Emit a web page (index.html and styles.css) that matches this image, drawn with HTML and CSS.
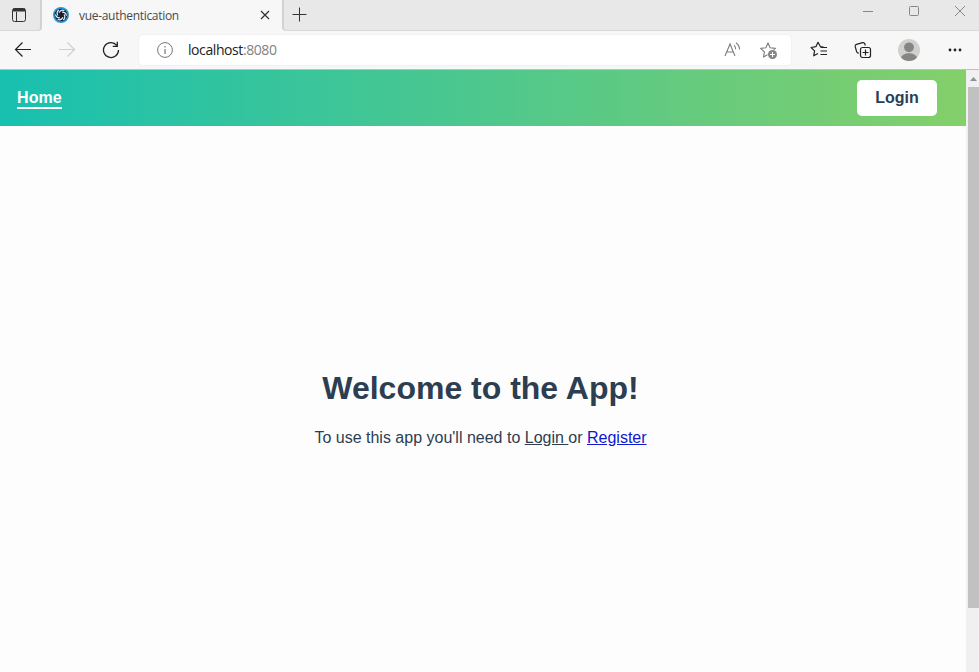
FILE: index.html
```html
<!DOCTYPE html>
<html lang="en">
<head>
<meta charset="utf-8">
<title>vue-authentication</title>
<link rel="stylesheet" href="styles.css">
</head>
<body>
<div class="browser">
  <header class="titlebar">
    <div class="tab-actions">
      <svg width="16" height="16" viewBox="0 0 16 16" fill="none" stroke="#333"><rect x="1.5" y="1.5" width="13" height="13" rx="2"/><path d="M2 3.5h12M2 2.5h12" stroke-width="2"/><path d="M5.5 5v9"/></svg>
    </div>
    <div class="tab">
      <svg class="favicon" width="16" height="16" viewBox="0 0 16 16"><circle cx="8" cy="8" r="8" fill="#2696dc"/><circle cx="8" cy="8" r="6.3" fill="#15202f"/><g fill="none" stroke="#e4edf5" stroke-width="1.2"><path id="blade" d="M6 5.6Q8 2.2 11.3 3.6"/><use href="#blade" transform="rotate(60 8 8)"/><use href="#blade" transform="rotate(120 8 8)"/><use href="#blade" transform="rotate(180 8 8)"/><use href="#blade" transform="rotate(240 8 8)"/><use href="#blade" transform="rotate(300 8 8)"/></g><circle cx="8" cy="8" r="1.5" fill="#15202f"/></svg>
      <span class="tab-title">vue-authentication</span>
      <svg class="tab-close" width="10" height="10" viewBox="0 0 10 10" stroke="#333" stroke-width="1.2"><path d="M1 1l8 8M9 1l-8 8"/></svg>
    </div>
    <div class="tab-rest">
      <svg width="15" height="15" viewBox="0 0 15 15" stroke="#333"><path d="M7.5 .5v14M.5 7.5h14"/></svg>
      <div class="window-buttons">
        <svg width="10" height="12" viewBox="0 0 10 12" stroke="#888"><path d="M0 6.5h10"/></svg>
        <svg width="10" height="12" viewBox="0 0 10 12" fill="none" stroke="#888"><rect x=".5" y="1.5" width="9" height="9" rx="1"/></svg>
        <svg width="10" height="12" viewBox="0 0 10 12" stroke="#888"><path d="M0 1l10 10M10 1L0 11"/></svg>
      </div>
    </div>
  </header>
  <div class="toolbar">
    <svg class="back" width="18" height="18" viewBox="0 0 18 18" fill="none" stroke="#222" stroke-width="1.2"><path d="M17 8.5H1.5M8.5 1.5l-7 7 7 7"/></svg>
    <svg class="forward" width="18" height="18" viewBox="0 0 18 18" fill="none" stroke="#d0d0d0" stroke-width="1.2"><path d="M1 8.5h15.5M9.5 1.5l7 7-7 7"/></svg>
    <svg class="reload" width="18" height="18" viewBox="0 0 18 18" fill="none" stroke="#222" stroke-width="1.3"><path d="M16.5 9A7.5 7.5 0 1 1 14.8 4.3M15.3.8v4.5h-4.5"/></svg>
    <div class="address">
      <svg width="16" height="16" viewBox="0 0 16 16" fill="none" stroke="#777"><circle cx="8" cy="8" r="7.4"/><path d="M8 7v5M8 4v1.4" stroke-width="1.2"/></svg>
      <span class="url">localhost<span class="port">:8080</span></span>
      <svg class="read" width="17" height="16" viewBox="0 0 17 16" fill="none" stroke="#7c7c7c" stroke-width="1.1"><path d="M1 14L6 2l5 12M2.8 10h6.4M10 3.2q1.6 1.5 1.6 4M12 .8q3.4 2.4 3.6 6.8"/></svg>
      <svg class="fav-add" width="18" height="18" viewBox="0 0 18 18"><path d="M8 1l2.1 4.8 5.3.6-3.9 3.5L12.6 15 8 12.4 3.4 15l1.1-5.1L.6 6.4l5.3-.6z" fill="none" stroke="#7c7c7c" stroke-width="1.1" stroke-linejoin="round"/><circle cx="12.5" cy="12.5" r="5" fill="#fff"/><circle cx="12.5" cy="12.5" r="4.5" fill="#858585"/><path d="M12.5 10v5M10 12.5h5" stroke="#fff"/></svg>
    </div>
    <svg class="favorites" width="18" height="18" viewBox="0 0 18 18" fill="none" stroke="#222" stroke-width="1.2" stroke-linejoin="round"><path d="M13.5 6.1l-3-.4L8 1.3 5.9 5.7l-4.8.8 3.5 3.4-.9 4.9L8 12.5M10.5 6.5H17M10.5 10H17M10.5 13.5H17"/></svg>
    <svg class="collections" width="18" height="18" viewBox="0 0 18 18" fill="none" stroke="#222" stroke-width="1.2"><rect x="6.5" y="6.5" width="10" height="10" rx="2"/><path d="M11.5 8.5v6M8.5 11.5h6M4.8 12.2Q3 12.2 2.6 10.7L1.2 5.5Q.8 3.8 2.5 3.3L8.6 1.6q1.7-.4 2.2 1.2l.5 1.7"/></svg>
    <svg class="profile" width="22" height="22" viewBox="0 0 22 22"><defs><clipPath id="avatar"><circle cx="11" cy="11" r="11"/></clipPath></defs><g clip-path="url(#avatar)"><path d="M0 0h22v22H0z" fill="#d2d0cd"/><circle cx="11" cy="8.3" r="4.9" fill="#858585"/><ellipse cx="11" cy="19" rx="8" ry="4.7" fill="#858585"/></g></svg>
    <svg class="more" width="14" height="4" viewBox="0 0 14 4" fill="#222"><circle cx="2" cy="2" r="1.4"/><circle cx="7" cy="2" r="1.4"/><circle cx="12" cy="2" r="1.4"/></svg>
  </div>
  <div class="viewport">
    <div class="page">
      <nav class="nav">
        <a class="home">Home</a>
        <button class="login">Login</button>
      </nav>
      <main class="welcome">
        <h1>Welcome to the App!</h1>
        <p>To use this app you'll need to <span class="link">Login </span>or <span class="link register">Register</span></p>
      </main>
    </div>
    <div class="scrollbar">
      <svg width="7" height="4" viewBox="0 0 7 4"><path d="M0 4l3.5-4L7 4z" fill="#8793a5"/></svg>
      <div class="thumb"></div>
    </div>
  </div>
</div>
</body>
</html>
```
FILE: styles.css
```css
* { box-sizing: border-box; }
body { margin: 0; font-family: "Liberation Sans", Arial, sans-serif; }
svg { display: block; flex: none; }

.browser { display: flex; flex-direction: column; width: 979px; height: 672px; overflow: hidden; background: #f7f7f7; }

.titlebar { display: flex; height: 31px; background: #f7f7f7; }
.tab-actions { width: 42px; padding: 7px 0 0 11px; background: #e8e8e8; border-right: 2px solid #d2d2d2; border-bottom: 1px solid #d8d8d8; border-bottom-right-radius: 4px; }
.tab { display: flex; align-items: center; width: 240px; padding: 0 12px 1px 11px; }
.tab-title { margin-left: 10px; font: 12px "Open Sans", sans-serif; color: #4a4a4a; letter-spacing: -0.3px; white-space: nowrap; }
.tab-close { margin-left: auto; }
.tab-rest { display: flex; flex: 1; justify-content: space-between; padding: 7px 14px 0 8px; background: #e8e8e8; border-left: 2px solid #d2d2d2; border-bottom: 1px solid #d8d8d8; border-bottom-left-radius: 4px; }
.window-buttons { display: flex; gap: 36px; margin-top: -2px; }

.toolbar { display: flex; align-items: center; height: 39px; padding-left: 14px; border-bottom: 1px solid #c0c0c0; }
.forward { margin-left: 26px; }
.reload { margin-left: 26px; }
.address { display: flex; align-items: center; width: 652px; height: 30px; margin-left: 19px; padding-left: 18px; border-radius: 4px; background: #fff; box-shadow: 0 0 2px #e3e3e3; }
.url { margin-left: 15px; padding-bottom: 2px; font: 14px "Open Sans", sans-serif; color: #222; letter-spacing: -0.42px; }
.port { color: #818181; }
.read { margin-left: auto; }
.fav-add { margin: 2px 13px 0 19px; }
.favorites { margin-left: 19px; }
.collections { margin-left: 26px; }
.profile { margin-left: 26px; }
.more { margin-left: 28px; }

.viewport { display: flex; flex: 1; }
.page { display: flex; flex-direction: column; width: 966px; background: #fdfdfd; color: #2c3e50; }
.nav { display: flex; align-items: center; justify-content: space-between; height: 56px; padding: 0 29px 0 17px; background: linear-gradient(to right, #18c0b0, #84cf6a); }
.home { margin-top: 1px; border-bottom: 2px solid #fff; color: #fff; font-size: 16px; font-weight: bold; line-height: 18px; letter-spacing: 0.1px; }
.login { width: 80px; height: 36px; padding: 0 0 1px; border: 0; border-radius: 5px; background: #fff; color: #2c3e50; font: bold 16px "Liberation Sans", Arial, sans-serif; }
.welcome { padding: 244px 5px 0 0; text-align: center; }
h1 { margin: 0; font-size: 32px; line-height: 37px; }
p { margin: 22px 0 0; font-size: 16px; line-height: 18px; }
.link { text-decoration: underline; }
.register { color: #0f18cf; }
.scrollbar { display: flex; flex-direction: column; align-items: center; width: 13px; padding: 7px 0 0 2px; background: #f0f0f0; }
.thumb { width: 11px; height: 521px; margin-top: 6px; background: #c1c1c1; }
```
